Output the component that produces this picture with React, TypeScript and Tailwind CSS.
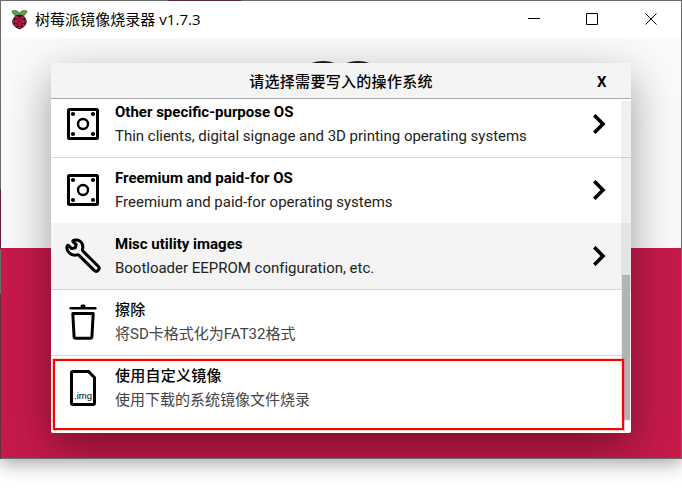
import React from "react";

const sans = "font-[Roboto,'Noto_Sans_CJK_SC',sans-serif]";

function ChipIcon() {
  return (
    <svg width="32" height="32" viewBox="0 0 32 32" fill="none" stroke="#000">
      <rect x="1.5" y="1.5" width="29" height="29" rx="1" strokeWidth="3" />
      <circle cx="16" cy="16" r="5" strokeWidth="2.4" />
      <g fill="#000" stroke="none">
        <circle cx="6" cy="6" r="2.1" />
        <circle cx="26" cy="6" r="2.1" />
        <circle cx="6" cy="26" r="2.1" />
        <circle cx="26" cy="26" r="2.1" />
      </g>
    </svg>
  );
}

function WrenchIcon() {
  return (
    <svg width="38" height="38" viewBox="0 0 38 38" fill="none" stroke="#000" strokeWidth="3" strokeLinejoin="round">
      <path d="M9.2 3.6C11.5 2.2 15.2 3 17 5C18.9 7.2 19.2 9.6 18.5 12.4C18.4 13.2 18.6 13.8 19.2 14.4L34.2 29.2C36.8 32 33 36 30.2 33.4L15 18.4C14.4 17.8 13.8 17.7 13 17.9C10.2 18.6 7.4 18 5.2 15.8C3 13.6 2.4 11 3.3 8.9C3.6 8.2 4.3 8.2 4.8 8.7L7.8 11.6L11.2 10.8L12.2 7.5L9.1 4.8C8.7 4.4 8.7 3.9 9.2 3.6Z" />
    </svg>
  );
}

function TrashIcon() {
  return (
    <svg width="28" height="38" viewBox="0 0 28 38" fill="none" stroke="#000" strokeWidth="3" strokeLinecap="round">
      <path d="M1.7 5.2H26.3" strokeWidth="2.6" />
      <path d="M13 3H15" strokeWidth="3" />
      <path d="M3.8 10.5H24.2L22.9 34.1Q22.8 35.2 21.7 35.2H6.3Q5.2 35.2 5.1 34.1Z" strokeLinejoin="round" />
    </svg>
  );
}

function ImageFileIcon() {
  return (
    <svg width="26" height="36" viewBox="0 0 26 36" fill="none" stroke="#000">
      <path d="M3 1.5H18.5L24.5 7.5V33Q24.5 34.5 23 34.5H3Q1.5 34.5 1.5 33V3Q1.5 1.5 3 1.5Z" strokeWidth="3" />
      <text x="4" y="29" fill="#000" stroke="none" fontSize="9.5" fontFamily="Liberation Sans, sans-serif">.img</text>
    </svg>
  );
}

function Chevron() {
  return (
    <svg width="13" height="20" viewBox="0 0 13 20" fill="none" stroke="#000" strokeWidth="3.6">
      <path d="M1.3 1.2L10 10L1.3 18.8" />
    </svg>
  );
}

function Raspberry() {
  return (
    <svg width="17" height="20" viewBox="0 0 18 21">
      <path d="M9 6C3 7 2 4 1 1C4 0 8 0 9 4C10 0 14 0 17 1C16 4 15 7 9 6Z" fill="#5fa04e" stroke="#2f4a28" strokeWidth=".6" />
      <path d="M9 5C13 5 15 7 16 10C18 14 15 18 9 20.5C3 18 0 14 2 10C3 7 5 5 9 5Z" fill="#30101c" />
      <g fill="#c51a4a">
        <ellipse cx="6" cy="7.8" rx="2.2" ry="1.3" />
        <ellipse cx="12" cy="7.8" rx="2.2" ry="1.3" />
        <circle cx="9" cy="10" r="1.7" />
        <circle cx="5.6" cy="12" r="2" />
        <circle cx="12.4" cy="12" r="2" />
        <circle cx="9" cy="14.7" r="2" />
        <ellipse cx="2.4" cy="12.2" rx=".9" ry="2.1" />
        <ellipse cx="15.6" cy="12.2" rx=".9" ry="2.1" />
        <circle cx="5" cy="16" r="1.5" />
        <circle cx="13" cy="16" r="1.5" />
        <ellipse cx="9" cy="18.4" rx="2" ry="1.1" />
      </g>
    </svg>
  );
}

type Row = { title: string; text: string; icon: React.ReactNode; line: string; sub?: boolean; hot?: boolean; cjk?: boolean };

const rows: Row[] = [
  { title: "Other specific-purpose OS", text: "Thin clients, digital signage and 3D printing operating systems", icon: <ChipIcon />, line: "border-[#d8d8d8]", sub: true },
  { title: "Freemium and paid-for OS", text: "Freemium and paid-for operating systems", icon: <ChipIcon />, line: "border-[#f4f4f4]", sub: true },
  { title: "Misc utility images", text: "Bootloader EEPROM configuration, etc.", icon: <WrenchIcon />, line: "border-[#d8d8d8]", sub: true, hot: true },
  { title: "擦除", text: "将SD卡格式化为FAT32格式", icon: <TrashIcon />, line: "border-[#d8d8d8]", cjk: true },
  { title: "使用自定义镜像", text: "使用下载的系统镜像文件烧录", icon: <ImageFileIcon />, line: "border-transparent", cjk: true },
];

function OsRow({ row }: { row: Row }) {
  return (
    <div className={`flex h-[66px] shrink-0 items-center border-b pb-[2px] ${row.line} ${row.hot ? "bg-[#f4f4f4]" : ""}`}>
      <div className="flex w-16 shrink-0 items-center justify-center">{row.icon}</div>
      <div className="flex-1 whitespace-nowrap">
        <div className={`h-6 text-[15px] leading-6 text-black ${row.cjk ? "font-medium tracking-[0.25px]" : "font-bold"}`}>{row.title}</div>
        <div className={`h-6 text-[15px] leading-6 ${row.cjk ? "text-[#444]" : "tracking-[-0.015px] text-[#222]"}`}>{row.text}</div>
      </div>
      {row.sub && <div className="mr-[25px]"><Chevron /></div>}
    </div>
  );
}

export default function App() {
  return (
    <div className={`relative h-[493px] w-[682px] overflow-hidden bg-white ${sans}`}>
      <div className="flex h-[459px] w-[682px] flex-col border border-[#6c6c6c] bg-white shadow-[0_4px_18px_rgba(0,0,0,0.38)]">
        <div className="flex h-[37px] shrink-0 items-center bg-white">
          <div className="ml-2.5"><Raspberry /></div>
          <div className="ml-[7px] flex-1 text-[15px] tracking-[0.04px] font-[Open_Sans,'Noto_Sans_CJK_SC',sans-serif]">树莓派镜像烧录器 v1.7.3</div>
          <svg width="153" height="37" viewBox="0 0 153 37" fill="none" stroke="#000">
            <path d="M0 17.5H12M58.5 12.5H69.5V23.5H58.5ZM117.5 12.5L128.5 23.5M128.5 12.5L117.5 23.5" />
          </svg>
        </div>
        <div className="flex flex-1 flex-col overflow-hidden bg-[linear-gradient(#fafafa_210px,#c51a4a_210px)] pl-[50px] pt-[25px]">
          <div className="relative h-[370px] w-[580px] shadow-[0_15px_42px_rgba(0,0,0,0.38)]">
            <svg className="absolute -top-[2px] left-[257px]" width="76" height="8" viewBox="0 0 76 8">
              <ellipse cx="15" cy="6" rx="15" ry="6" fill="#151719" />
              <ellipse cx="50" cy="6" rx="15" ry="6" fill="#151719" />
            </svg>
            <div className="relative flex h-full flex-col overflow-hidden rounded-b-[2px] bg-white">
              <div className="flex h-9 shrink-0 items-center border-b border-[#aaa] bg-[#f4f4f4]">
                <div className="flex-1 pl-[34px] pt-0.5 text-center text-[15px] font-medium leading-5 tracking-[0.3px]">请选择需要写入的操作系统</div>
                <div className="w-[34px] shrink-0 pt-[3px] text-[15px] font-bold leading-5">X</div>
              </div>
              <div className="flex flex-1 flex-col overflow-hidden">
                <div className="-mt-[7px]">
                  {rows.map((row) => <OsRow key={row.title} row={row} />)}
                </div>
              </div>
              <div className="absolute right-0 top-[38px] h-[320px] w-[10px] bg-black/[0.06]">
                <div className="ml-px mt-[174px] h-[145px] w-2 bg-[#b3b3b3]" />
              </div>
            </div>
          </div>
        </div>
      </div>
      <div className="absolute left-0 top-[189px] h-[270px] w-px bg-[linear-gradient(#6a2038_60px,#6c6c6c_60px,#6c6c6c_105px,#6b2a3a_105px)]" />
      <div className="absolute left-[168px] top-0 h-px w-[73px] bg-[#5a2a3c]" />
      <div className="absolute left-[53px] top-[359px] h-[71px] w-[571px] border-2 border-[#f00] shadow-[0_0_0_1px_rgba(255,0,0,0.2)]" />
    </div>
  );
}
